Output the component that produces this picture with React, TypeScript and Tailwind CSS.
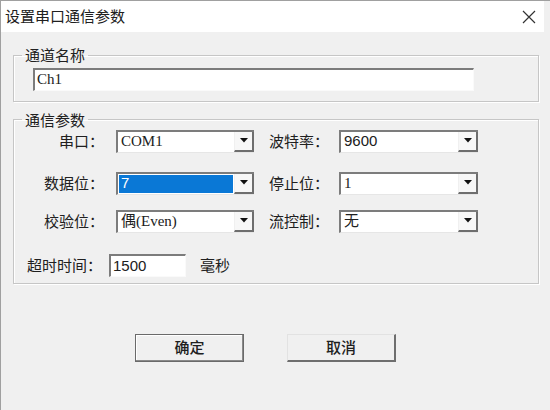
import { useState } from 'react';

const serif = "font-['Liberation_Serif','Noto_Sans_CJK_SC',serif]";
const sans = "font-['Liberation_Sans','Noto_Sans_CJK_SC',sans-serif]";

function Arrow() {
  return (
    <svg width="8" height="5" viewBox="0 0 8 5">
      <path d="M0 0H8L4 4.5Z" fill="#111" />
    </svg>
  );
}

function Combo({ value, width, font, selected }: { value: string; width: string; font: string; selected?: boolean }) {
  return (
    <div className={`flex h-[23px] ${width} border-t-2 border-l-2 border-[#7c7c7c] border-b border-b-[#e6e6e6] bg-white`}>
      <div className="flex-1 flex p-[1px]">
        <div className={`flex-1 flex items-center pl-[2px] ${font} ${selected ? 'bg-[#0a78d6] text-white' : ''}`}>{value}</div>
      </div>
      <div className="w-[20px] flex items-center justify-center bg-[#f7f7f7] border-l border-l-[#f0f0f0] border-r-2 border-b-2 border-[#6e6e6e]">
        <Arrow />
      </div>
    </div>
  );
}

function Group({ title, children, className }: { title: string; children: React.ReactNode; className: string }) {
  return (
    <fieldset className={`w-[526px] border border-[#c6c6c6] shadow-[inset_1px_1px_0_#fff,1px_1px_0_#fff] ${className}`}>
      <legend className="ml-[8px] px-[3px] leading-[20px]">{title}</legend>
      {children}
    </fieldset>
  );
}

export default function App() {
  const [name, setName] = useState('Ch1');
  const [timeout, setTimeoutValue] = useState('1500');

  const rows = [
    { l: '串口：', v: 'COM1', f: serif, r: '波特率：', rv: '9600', rf: sans, mt: 'mt-0' },
    { l: '数据位：', v: '7', f: sans, r: '停止位：', rv: '1', rf: serif, mt: 'mt-[19px]', sel: true },
    { l: '校验位：', v: '偶(Even)', f: serif, r: '流控制：', rv: '无', rf: sans, mt: 'mt-[15px]' },
  ];

  return (
    <div className="w-[550px] h-[410px] overflow-hidden bg-[#f0f0f0] border-t border-l border-[#a0a0a0] font-['Noto_Sans_CJK_SC',sans-serif] text-[15px] text-[#202020]">
      <div className="flex h-[31px] mr-[6px] items-center justify-between bg-white pl-[4px] pr-[8px]">
        <span>设置串口通信参数</span>
        <svg width="14" height="14" viewBox="0 0 14 14">
          <path d="M1 1L13 13M13 1L1 13" stroke="#333" strokeWidth="1.2" />
        </svg>
      </div>

      <div className="pl-[12px] pt-[13px]">
        <Group title="通道名称" className="pb-[10px]">
          <div className="pl-[19px] mt-[2px]">
            <input
              value={name}
              onChange={e => setName(e.target.value)}
              className={`w-[441px] h-[23px] bg-white border-t-2 border-l-2 border-[#7c7c7c] border-b border-r border-b-[#fafafa] border-r-[#fafafa] px-[2px] outline-none ${serif} text-[15px]`}
            />
          </div>
        </Group>

        <Group title="通信参数" className="mt-[8px] pb-[6px]">
          {rows.map(r => (
            <div key={r.l} className={`flex items-center ${r.mt}`}>
              <div className="w-[90px] text-right pr-[0px]">{r.l}</div>
              <div className="ml-[12px]">
                <Combo value={r.v} width="w-[138px]" font={r.f} selected={r.sel} />
              </div>
              <div className="ml-[15px] w-[70px]">{r.r}</div>
              <Combo value={r.rv} width="w-[139px]" font={r.rf} />
            </div>
          ))}
          <div className="flex items-center mt-[21px] pl-[13px]">
            <span>超时时间：</span>
            <input
              value={timeout}
              onChange={e => setTimeoutValue(e.target.value)}
              className={`ml-[7px] w-[77px] h-[23px] bg-white border-t-2 border-l-2 border-[#7c7c7c] border-b border-r border-b-[#fafafa] border-r-[#fafafa] px-[2px] outline-none ${sans} text-[15px]`}
            />
            <span className="ml-[14px]">毫秒</span>
          </div>
        </Group>
      </div>

      <div className="flex mt-[50px] pl-[134px] gap-[43px]">
        <button className="w-[109px] h-[28px] bg-[#f0f0f0] border border-[#6a6a6a] shadow-[inset_-1px_-1px_0_#8a8a8a,inset_1px_1px_0_#fff] font-medium">确定</button>
        <button className="w-[109px] h-[28px] bg-[#f0f0f0] border-t border-l border-[#e2e2e2] border-r-2 border-b-2 border-r-[#6e6e6e] border-b-[#6e6e6e] font-medium">取消</button>
      </div>
    </div>
  );
}
